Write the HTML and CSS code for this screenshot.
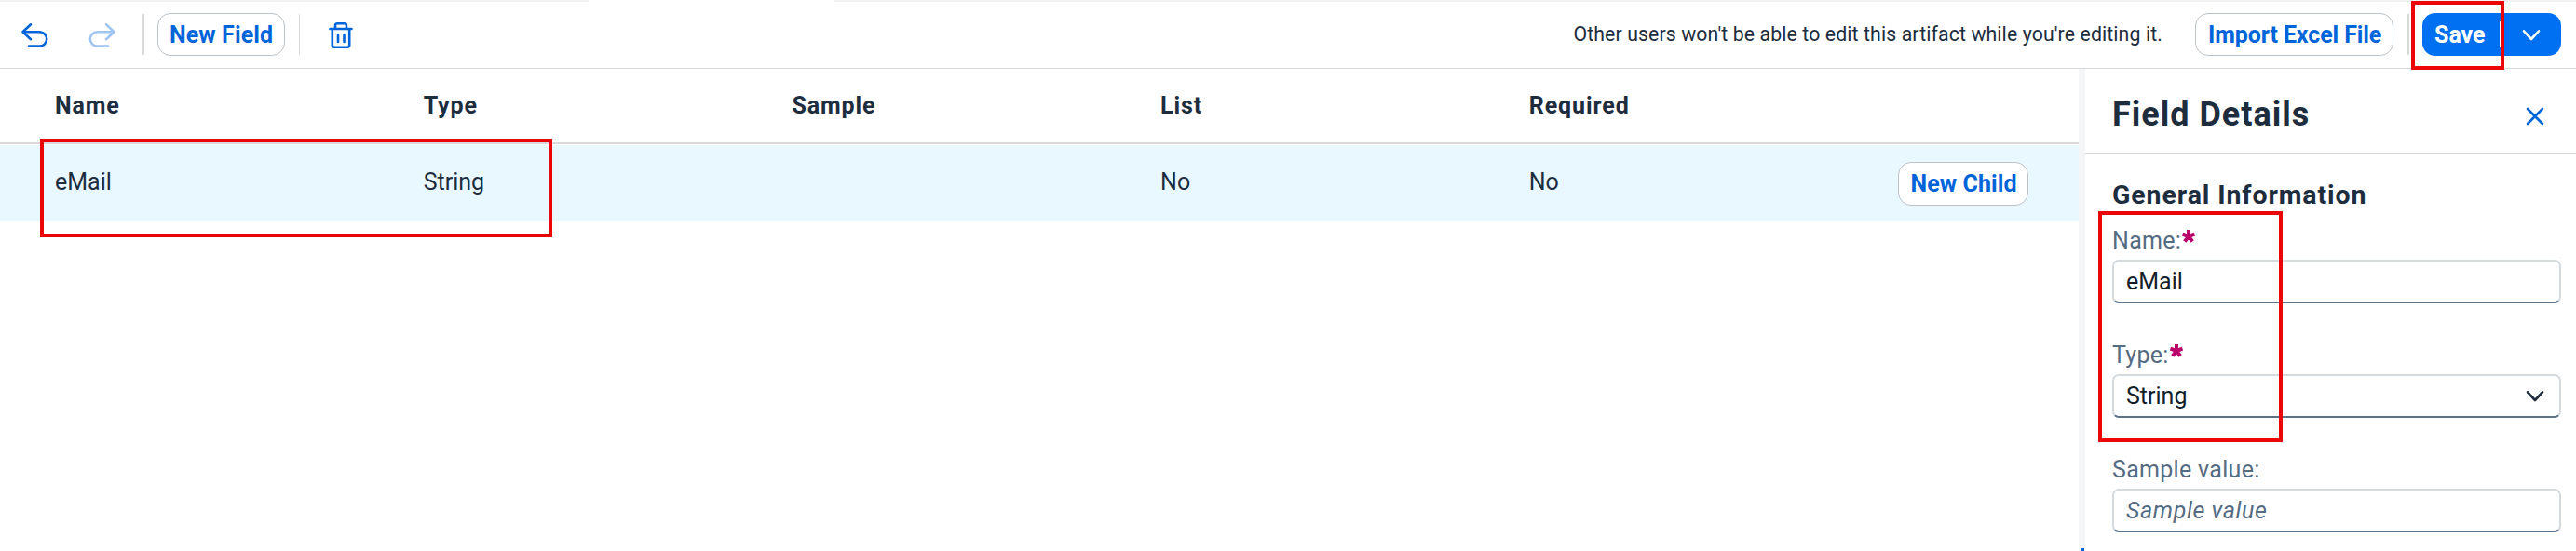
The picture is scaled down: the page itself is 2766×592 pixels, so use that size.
FILE: index.html
```html
<!DOCTYPE html>
<html lang="en">
<head>
<meta charset="utf-8">
<title>Field Details</title>
<link rel="stylesheet" href="styles.css">
</head>
<body>
<div class="app">
  <div class="tabstrip"><span class="tab-active"></span></div>
  <header class="toolbar">
    <button class="icon-btn undo" aria-label="Undo"><svg width="32" height="30" viewBox="0 0 32 30"><path d="M12 3.300 3.500 11.200l8.500 8M3.500 11.200h18a7.700 7.700 0 0 1 0 15.400H10"/></svg></button>
    <button class="icon-btn redo" aria-label="Redo"><svg width="32" height="30" viewBox="0 0 32 30"><path d="M20 3.300l8.500 7.900-8.500 8M28.500 11.200h-18a7.700 7.700 0 0 0 0 15.400H22"/></svg></button>
    <span class="sep sep-a"></span>
    <button class="btn new-field">New Field</button>
    <span class="sep sep-b"></span>
    <button class="icon-btn trash" aria-label="Delete"><svg width="28" height="32" viewBox="0 0 28 32"><path d="M2.500 9h23M8 8.700V5.500a2.200 2.200 0 0 1 2.200-2.200h7.600A2.200 2.200 0 0 1 20 5.500v3.200M4.800 9.200V26.500a2.200 2.200 0 0 0 2.200 2.200h14a2.200 2.200 0 0 0 2.200-2.200V9.200M11 15v8M17.500 15v8"/></svg></button>
    <span class="message">Other users won't be able to edit this artifact while you're editing it.</span>
    <button class="btn import">Import Excel File</button>
    <span class="sep sep-c"></span>
    <div class="split">
      <button class="save">Save</button>
      <span class="split-line"></span>
      <button class="more" aria-label="More"><svg width="22" height="16" viewBox="0 0 22 16"><path d="M3 3.300l8 8.700 8-8.700"/></svg></button>
    </div>
  </header>
  <div class="body">
    <main class="table">
      <div class="row head"><span>Name</span><span>Type</span><span>Sample</span><span>List</span><span>Required</span></div>
      <div class="row item"><span>eMail</span><span>String</span><span></span><span>No</span><span>No</span><button class="btn new-child">New Child</button></div>
    </main>
    <div class="splitter"><i></i></div>
    <aside class="panel">
      <div class="panel-head">
        <h1>Field Details</h1>
        <button class="close" aria-label="Close"><svg width="22" height="22" viewBox="0 0 22 22"><path d="M3 3l16 16M19 3L3 19"/></svg></button>
      </div>
      <div class="form">
        <h2>General Information</h2>
        <div class="label">Name:<svg class="star" width="16" height="16" viewBox="0 0 16 16"><path d="M8 8V1M8 8l6.500-2.300M8 8l4.200 5.500M8 8l-4.200 5.500M8 8L1.500 5.700"/></svg></div>
        <div class="field">eMail</div>
        <div class="label">Type:<svg class="star" width="16" height="16" viewBox="0 0 16 16"><path d="M8 8V1M8 8l6.500-2.300M8 8l4.200 5.500M8 8l-4.200 5.500M8 8L1.500 5.700"/></svg></div>
        <div class="field">String<svg class="arrow" width="22" height="16" viewBox="0 0 22 16"><path d="M3 3.300l8 8.700 8-8.700"/></svg></div>
        <div class="label">Sample value:</div>
        <div class="field placeholder">Sample value</div>
      </div>
    </aside>
  </div>
  <div class="mark mark-save"></div>
  <div class="mark mark-row"></div>
  <div class="mark mark-form"></div>
</div>
</body>
</html>
```
FILE: styles.css
```css
* { box-sizing: border-box; }
body {
  margin: 0;
  background: #fff;
  color: #1d2d3e;
  font: 25px Roboto, sans-serif;
}
.app {
  position: relative;
  display: flex;
  flex-direction: column;
  width: 2766px;
  height: 592px;
  overflow: hidden;
}
button { font: inherit; color: inherit; border: 0; background: none; padding: 0; }
svg { display: block; fill: none; stroke: #0064d9; stroke-width: 2.6; stroke-linecap: round; stroke-linejoin: round; }

.tabstrip { height: 2px; flex: none; background: #f2f2f2; }
.tab-active { display: block; width: 264px; height: 2px; margin-left: 632px; background: #fff; }

.toolbar {
  display: flex;
  flex: none;
  align-items: flex-start;
  height: 72px;
  padding: 12px 16px 0 21px;
  border-bottom: 1px solid #d9d9d9;
}
.icon-btn { margin-top: 9px; }
.redo { margin-left: 41px; opacity: .37; }
.trash { margin: 8px 0 0 30px; }
.sep { width: 2px; height: 44px; margin-top: 1px; background: #d9d9d9; }
.sep-a { margin-left: 27px; }
.sep-b { width: 1px; margin-left: 15px; }
.sep-c { margin-left: 15px; }
.btn {
  height: 46px;
  border: 1px solid #bcc3ca;
  border-radius: 14px;
  background: #fff;
  color: #0064d9;
  font-weight: 700;
  line-height: 45px;
  text-align: left;
  padding-left: 12px;
  white-space: nowrap;
}
.new-field { width: 137px; margin-left: 14px; letter-spacing: .1px; }
.import { width: 213px; margin-left: 36px; padding-left: 13px; letter-spacing: -.1px; }
.message { margin: 0 -1px 0 auto; font-size: 21.3px; letter-spacing: .1px; line-height: 46px; white-space: nowrap; }
.split {
  display: flex;
  width: 149px;
  height: 46px;
  margin-left: 14px;
  border-radius: 14px;
  background: #0070f2;
  color: #fff;
}
.save { width: 83px; padding-left: 13px; font-weight: 700; line-height: 47px; text-align: left; }
.split-line { width: 1px; height: 28px; margin-top: 9px; background: #fff; }
.more { display: flex; margin: 16px 0 0 22px; height: 16px; }
.more svg { stroke: #fff; }

.body { display: flex; flex: 1; min-height: 0; }
.table { width: 2232px; }
.row { display: grid; grid-template-columns: repeat(5, 395.7px) 141px; padding-left: 59px; }
.head { height: 81px; border-bottom: 2px solid #d9d9d9; font-weight: 700; line-height: 80px; letter-spacing: .9px; }
.item { height: 81px; margin-top: 1px; background: #e9f8ff; line-height: 79px; }
.new-child { margin: 18px 0 0 1px; height: 47px; letter-spacing: .1px; line-height: 46px; }
.splitter { display: flex; align-items: flex-end; justify-content: center; width: 7px; background: #f4f6f8; }
.splitter i { width: 4px; height: 3px; background: #0064d9; }

.panel { width: 527px; }
.panel-head {
  display: flex;
  justify-content: space-between;
  height: 91px;
  padding: 0 33px 0 29px;
  border-bottom: 1px solid #d9d9d9;
}
h1, h2 { margin: 0; font-weight: 700; }
h1 { font-size: 36px; line-height: 98px; letter-spacing: 1px; }
.close { height: 22px; margin-top: 40px; }
.form { padding: 22px 16px 0 29px; }
h2 { font-size: 28.5px; line-height: 46px; letter-spacing: .9px; }
.label { display: flex; height: 46px; line-height: 51px; letter-spacing: .3px; color: #556b82; }
.field {
  display: flex;
  justify-content: space-between;
  height: 47px;
  margin-bottom: 30px;
  padding: 0 15px 0 13px;
  border: 2px solid #d5dadf;
  border-bottom-color: #5b738b;
  border-radius: 7px;
  color: #131e29;
  line-height: 43px;
}
.placeholder { color: #556b82; font-style: italic; letter-spacing: .6px; }
.star { margin: 13px 0 0; stroke: #ba066c; stroke-width: 4; stroke-linecap: butt; }
.arrow { margin-top: 14px; stroke: #1d2d3e; }

.mark { position: absolute; border: 4px solid #eb0505; }
.mark-save { left: 2589px; top: 1px; width: 100px; height: 74px; }
.mark-row { left: 43px; top: 149px; width: 550px; height: 106px; }
.mark-form { left: 2253px; top: 227px; width: 198px; height: 248px; }
```
